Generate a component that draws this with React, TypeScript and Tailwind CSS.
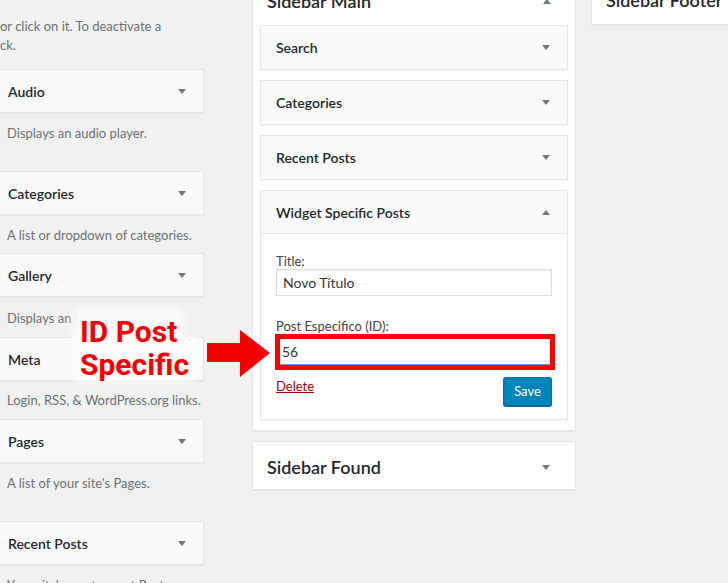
const font = { fontFamily: "Lato, 'Noto Sans', sans-serif" };

const ArrowDown = () => (
  <svg width="8" height="5" viewBox="0 0 8 5" className="shrink-0">
    <polygon points="0,0 8,0 4,5" fill="#72777c" />
  </svg>
);

const ArrowUp = () => (
  <svg width="8" height="5" viewBox="0 0 8 5" className="shrink-0">
    <polygon points="0,5 8,5 4,0" fill="#72777c" />
  </svg>
);

type AvailableProps = { title: string; desc: string; top: string; descTop: string };

const AvailableWidget: React.FC<AvailableProps> = ({ title, desc, top, descTop }) => (
  <div className={top}>
    <div className="h-[44px] bg-[#fafafa] border border-l-0 border-[#e5e5e5] shadow-[0_1px_1px_rgba(0,0,0,0.04)] flex items-center justify-between pl-2 pr-[17px]">
      <span className="text-[14px] font-semibold text-[#23282d]">{title}</span>
      <ArrowDown />
    </div>
    <p className={`${descTop} pl-[7px] text-[13px] leading-[18px] text-[#6c7176] whitespace-nowrap`}>{desc}</p>
  </div>
);

const SidebarWidget: React.FC<{ title: string }> = ({ title }) => (
  <div className="h-[45px] bg-[#fafafa] border border-[#e5e5e5] shadow-[0_1px_1px_rgba(0,0,0,0.04)] flex items-center justify-between pl-[15px] pr-[17px]">
    <span className="text-[14px] font-semibold text-[#23282d]">{title}</span>
    <ArrowDown />
  </div>
);

export default function App() {
  return (
    <div className="relative w-[728px] h-[583px] overflow-hidden bg-[#f1f1f1]" style={font}>
      <div className="flex items-start">
        {/* Available widgets */}
        <div className="w-[204px] shrink-0">
          <p className="mt-[17px] text-[13px] leading-[19px] text-[#6c7176] whitespace-nowrap">
            or click on it. To deactivate a
            <br />
            ck.
          </p>
          <AvailableWidget title="Audio" desc="Displays an audio player." top="mt-[14px]" descTop="mt-[11px]" />
          <AvailableWidget title="Categories" desc="A list or dropdown of categories." top="mt-[29px]" descTop="mt-[11px]" />
          <AvailableWidget title="Gallery" desc="Displays an image gallery." top="mt-[9px]" descTop="mt-[12px]" />
          <AvailableWidget title="Meta" desc="Login, RSS, & WordPress.org links." top="mt-[10px]" descTop="mt-[10px]" />
          <AvailableWidget title="Pages" desc="A list of your site's Pages." top="mt-[10px]" descTop="mt-[11px]" />
          <AvailableWidget title="Recent Posts" desc="Your site's most recent Posts." top="mt-[29px]" descTop="mt-[11px]" />
        </div>

        {/* Sidebars */}
        <div className="ml-[48px] w-[324px] shrink-0 -mt-[24px]">
          <div className="bg-white border border-[#e5e5e5] shadow-[0_1px_1px_rgba(0,0,0,0.04)] px-[7px] pb-[10px]">
            <div className="h-[48px] flex items-center justify-between pl-[7px] pr-[17px]">
              <h2 className="text-[18px] font-semibold text-[#23282d]">Sidebar Main</h2>
              <ArrowUp />
            </div>
            <div className="flex flex-col gap-[10px]">
              <SidebarWidget title="Search" />
              <SidebarWidget title="Categories" />
              <SidebarWidget title="Recent Posts" />

              <div className="border border-[#e5e5e5] shadow-[0_1px_1px_rgba(0,0,0,0.04)]">
                <div className="h-[43px] bg-[#fafafa] border-b border-[#e5e5e5] flex items-center justify-between pl-[15px] pr-[17px]">
                  <span className="text-[14px] font-semibold text-[#23282d]">Widget Specific Posts</span>
                  <ArrowUp />
                </div>
                <div className="bg-white px-[15px] pt-[19px] pb-[13px]">
                  <label className="block text-[13px] leading-[16px] text-[#444]">Title:</label>
                  <div className="h-[27px] border border-[#ddd] shadow-[inset_0_1px_2px_rgba(0,0,0,0.07)] flex items-center pl-[6px] text-[14px] text-[#32373c]">
                    Novo Título
                  </div>
                  <label className="block mt-[22px] text-[13px] leading-[16px] text-[#444]">Post Especifico (ID):</label>
                  <div className="-ml-px -mr-[3px] border-[5px] border-[#ff0000]">
                    <div className="h-[26px] border-b border-[#5b9dd9] flex items-center pl-[2px] text-[14px] text-[#32373c] bg-white">
                      56
                    </div>
                  </div>
                  <div className="mt-[7px] flex items-start justify-between">
                    <a className="text-[13px] leading-[18px] text-[#a00] underline">Delete</a>
                    <button className="h-[29px] w-[49px] rounded-[3px] bg-[#0085ba] border border-[#0073aa] border-b-[#006799] shadow-[0_1px_0_#006799] text-[13px] text-white">
                      Save
                    </button>
                  </div>
                </div>
              </div>
            </div>
          </div>

          <div className="mt-[10px] h-[49px] bg-white border border-[#e5e5e5] shadow-[0_1px_1px_rgba(0,0,0,0.04)] flex items-center justify-between pl-[14px] pr-[25px] pt-[3px]">
            <h2 className="text-[18px] font-semibold text-[#23282d]">Sidebar Found</h2>
            <ArrowDown />
          </div>
        </div>

        <div className="ml-[15px] w-[160px] shrink-0 -mt-[24px]">
          <div className="h-[49px] bg-white border border-[#e5e5e5] shadow-[0_1px_1px_rgba(0,0,0,0.04)] flex items-center pl-[14px]">
            <h2 className="text-[18px] font-semibold text-[#23282d] whitespace-nowrap">Sidebar Footer</h2>
          </div>
        </div>
      </div>

      {/* Annotation */}
      <div className="absolute left-[72px] top-[307px] w-[112px] h-[42px] rounded-md bg-[#f9f9f9] blur-[3px]" />
      <div className="absolute left-[72px] top-[336px] w-[125px] h-[46px] rounded-md bg-[#fbfbfb] blur-[2px]" />
      <div
        className="absolute left-[80px] top-[315px] text-[30px] leading-[33px] font-bold text-[#f50000]"
        style={{ fontFamily: "Roboto, 'Liberation Sans', sans-serif" }}
      >
        ID Post
        <br />
        Specific
      </div>
      <svg className="absolute left-[205px] top-[328px]" width="67" height="52" viewBox="0 0 67 52">
        <polygon points="2,15 35,15 35,2 65,25 35,49 35,34 2,34" fill="#f50000" />
      </svg>
    </div>
  );
}
